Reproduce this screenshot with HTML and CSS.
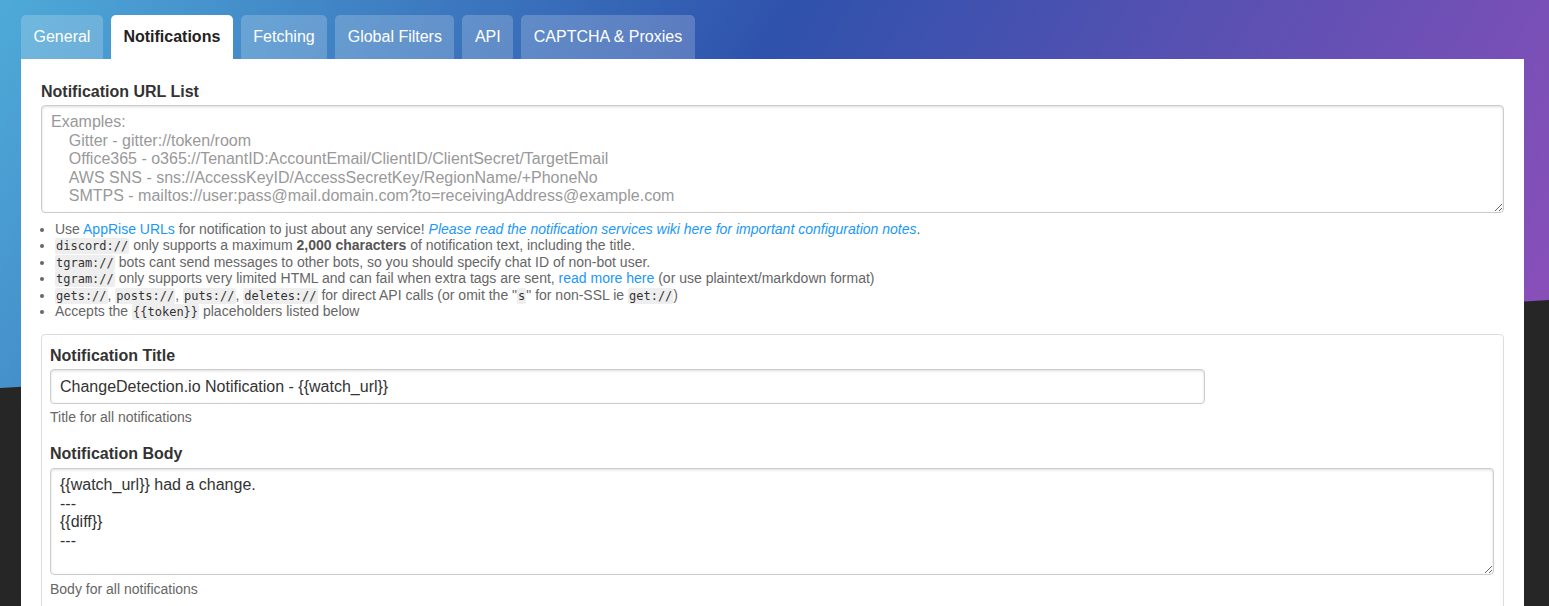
FILE: index.html
```html
<!DOCTYPE html>
<html lang="en">
<head>
<meta charset="utf-8">
<title>Settings - Notifications</title>
<link rel="stylesheet" href="styles.css">
</head>
<body>
<div class="page">
  <nav class="tabs">
    <a class="tab" href="#general">General</a>
    <a class="tab tab-active" href="#notifications">Notifications</a>
    <a class="tab" href="#fetching">Fetching</a>
    <a class="tab" href="#filters">Global Filters</a>
    <a class="tab" href="#api">API</a>
    <a class="tab" href="#captcha">CAPTCHA &amp; Proxies</a>
  </nav>
  <div class="panel">
    <label class="label label-urls" for="urls">Notification URL List</label>
    <textarea id="urls" class="area area-urls" placeholder="Examples:&#10;    Gitter - gitter://token/room&#10;    Office365 - o365://TenantID:AccountEmail/ClientID/ClientSecret/TargetEmail&#10;    AWS SNS - sns://AccessKeyID/AccessSecretKey/RegionName/+PhoneNo&#10;    SMTPS - mailtos://user:pass@mail.domain.com?to=receivingAddress@example.com"></textarea>
    <ul class="notes">
      <li>Use <a href="#apprise">AppRise URLs</a> for notification to just about any service! <i><a href="#wiki">Please read the notification services wiki here for important configuration notes</a></i>.</li>
      <li><code>discord://</code> only supports a maximum <strong>2,000 characters</strong> of notification text, including the title.</li>
      <li><code>tgram://</code> bots cant send messages to other bots, so you should specify chat ID of non-bot user.</li>
      <li><code>tgram://</code> only supports very limited HTML and can fail when extra tags are sent, <a href="#tgram">read more here</a> (or use plaintext/markdown format)</li>
      <li><code>gets://</code>, <code>posts://</code>, <code>puts://</code>, <code>deletes://</code> for direct API calls (or omit the "<code>s</code>" for non-SSL ie <code>get://</code>)</li>
      <li>Accepts the <code>{{token}}</code> placeholders listed below</li>
    </ul>
    <div class="box">
      <label class="label label-title" for="title">Notification Title</label>
      <input id="title" class="input" type="text" value="ChangeDetection.io Notification - {{watch_url}}">
      <span class="hint">Title for all notifications</span>
      <label class="label label-body" for="body">Notification Body</label>
      <textarea id="body" class="area area-body">{{watch_url}} had a change.
---
{{diff}}
---</textarea>
      <span class="hint hint-body">Body for all notifications</span>
    </div>
  </div>
</div>
</body>
</html>
```

FILE: styles.css
```css
html, body {
  margin: 0;
  padding: 0;
}

body {
  background: #262626;
  font-family: "Liberation Sans", Arial, sans-serif;
  font-size: 16px;
  color: #333;
}

body::before {
  content: "";
  position: absolute;
  top: 0;
  left: 0;
  width: 100%;
  height: 390px;
  z-index: -1;
  background: linear-gradient(120deg, #4eaad8 0%, #2f52ac 45%, #8e4fba 100%);
  clip-path: polygon(0 0, 100% 0, 100% 300px, 0 388px);
}

.page {
  padding-top: 15px;
  margin-left: 21px;
  width: 1503px;
}

.tabs {
  display: flex;
  gap: 8px;
}

.tab {
  display: block;
  padding: 13px 12.5px;
  line-height: 18px;
  font-size: 16px;
  color: #fff;
  text-decoration: none;
  background: rgba(255, 255, 255, 0.2);
  border-radius: 5px 5px 0 0;
}

.tab-active {
  background: #fff;
  color: #222;
  font-weight: bold;
}

.panel {
  background: #fff;
  padding: 24px 20px 0 20px;
}

.label {
  display: block;
  font-weight: bold;
  font-size: 16px;
  line-height: 18px;
  color: #333;
  margin-bottom: 5px;
}

.label-urls,
.label-title {
  margin-bottom: 4px;
}

.area,
.input {
  display: block;
  box-sizing: border-box;
  width: 100%;
  font-family: "Liberation Sans", Arial, sans-serif;
  font-size: 16px;
  line-height: 18.5px;
  color: #333;
  border: 1px solid #ccc;
  border-radius: 4px;
  box-shadow: inset 0 1px 3px #ddd;
  margin: 0;
  outline: none;
}

.area {
  padding: 7px 9px 6px 9px;
  resize: vertical;
}

.area::placeholder {
  color: #999;
  opacity: 1;
}

.area-urls {
  height: 108px;
}

.notes {
  margin: 8px 0 0 0;
  padding-left: 14px;
  font-size: 14px;
  line-height: 16.4px;
  color: #666;
}

.notes a {
  color: #1b98f8;
  text-decoration: none;
}

.notes strong {
  color: #555;
}

.notes code {
  font-family: "DejaVu Sans Mono", monospace;
  font-size: 12px;
  line-height: 12px;
  color: #333;
  background: #eee;
  padding: 1px 1px;
  border-radius: 2px;
}

.box {
  margin-top: 15px;
  border: 1px solid #ddd;
  border-radius: 4px;
  padding: 12px 9px 40px 8px;
}

.input {
  width: 80%;
  height: 35px;
  padding: 0 9px;
}

.hint {
  display: block;
  margin-top: 5px;
  font-size: 14px;
  line-height: 16px;
  color: #666;
}

.label-body {
  margin-top: 20px;
}

.area-body {
  height: 107px;
}

.hint-body {
  margin-top: 6px;
}
```
